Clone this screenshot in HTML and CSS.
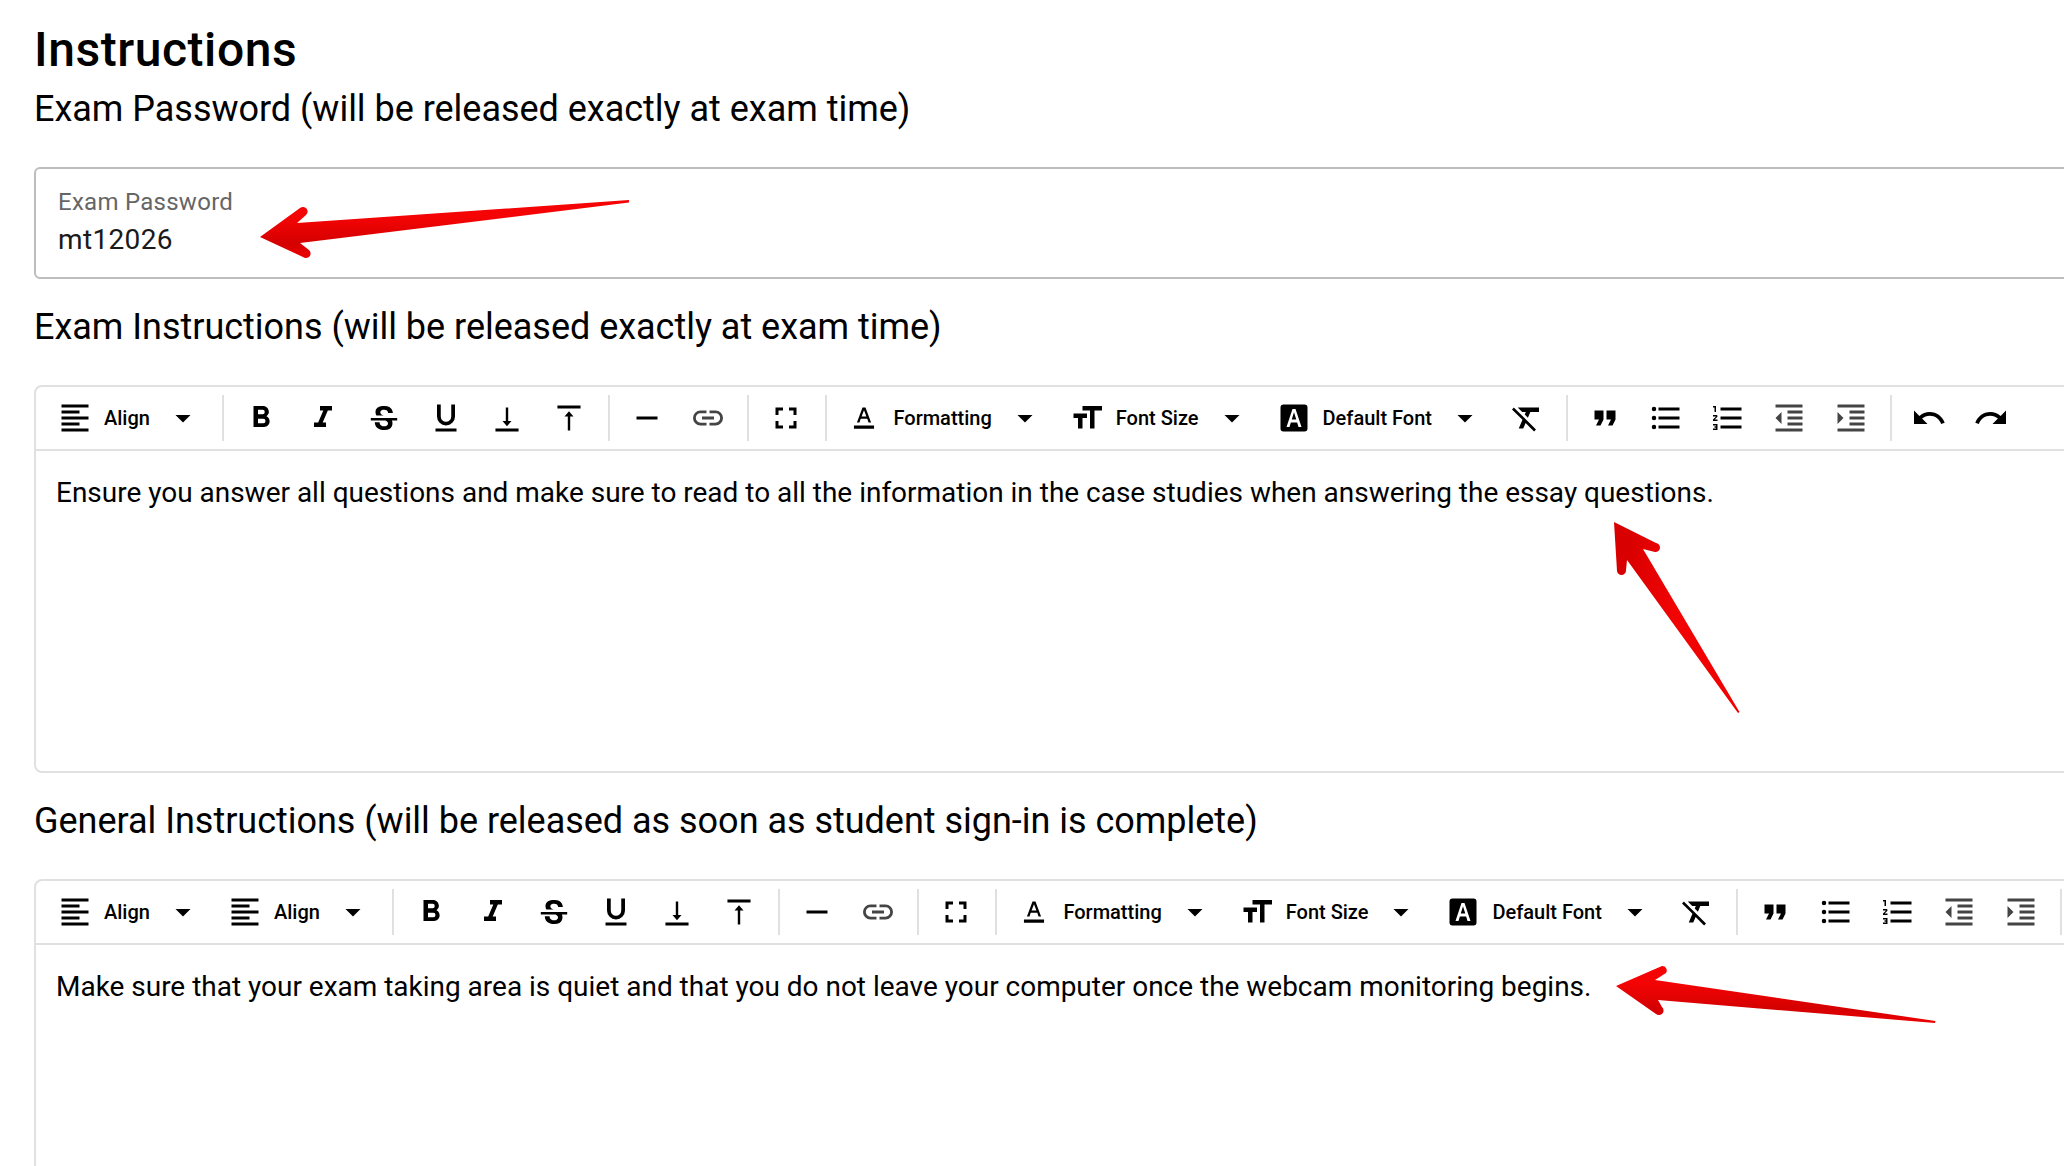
FILE: index.html
```html
<!DOCTYPE html>
<html lang="en">
<head>
<meta charset="utf-8">
<title>Instructions</title>
<link rel="stylesheet" href="styles.css">
</head>
<body>
<svg class="defs" width="0" height="0" aria-hidden="true">
  <symbol id="i-align" viewBox="0 0 24 24"><path d="M3,3H21V5H3V3M3,7H15V9H3V7M3,11H21V13H3V11M3,15H15V17H3V15M3,19H21V21H3V19Z"/></symbol>
  <symbol id="i-caret" viewBox="0 0 24 24"><path d="M7,10L12,15L17,10H7Z"/></symbol>
  <symbol id="i-bold" viewBox="0 0 24 24"><path d="M13.5,15.5H10V12.5H13.5A1.5,1.5 0 0,1 15,14A1.5,1.5 0 0,1 13.5,15.5M10,6.5H13A1.5,1.5 0 0,1 14.5,8A1.5,1.5 0 0,1 13,9.5H10M15.6,10.79C16.57,10.11 17.25,9 17.25,8C17.25,5.74 15.5,4 13.25,4H7V18H14.04C16.14,18 17.75,16.3 17.75,14.21C17.75,12.69 16.89,11.39 15.6,10.79Z"/></symbol>
  <symbol id="i-italic" viewBox="0 0 24 24"><path d="M10,4V7H12.21L8.79,15H6V18H14V15H11.79L15.21,7H18V4H10Z"/></symbol>
  <symbol id="i-strike" viewBox="-3 -3 30 30"><path d="M23,12V14H18.61C19.61,16.14 19.56,22 12.38,22C4.05,22.05 4.37,15.5 4.37,15.5L8.34,15.55C8.37,18.92 11.5,18.92 12.12,18.88C12.76,18.83 15.15,18.84 15.34,16.5C15.42,15.41 14.32,14.58 13.12,14H1V12H23M19.41,7.89L15.43,7.86C15.43,7.86 15.6,5.09 12.15,5.08C8.7,5.06 9,7.28 9,7.56C9.04,7.84 9.34,9.22 12,9.88H5.71C5.71,9.88 2.22,3 10.74,2C19.45,1 19.43,7.91 19.41,7.89Z"/></symbol>
  <symbol id="i-under" viewBox="0 0 24 24"><path d="M5,21H19V19H5V21M12,17A6,6 0 0,0 18,11V3H15.5V11A3.5,3.5 0 0,1 12,14.5A3.5,3.5 0 0,1 8.5,11V3H6V11A6,6 0 0,0 12,17Z"/></symbol>
  <symbol id="i-down" viewBox="0 0 24 24"><path d="M11.2,5H12.8V14H15L12,17.5L9,14H11.2V5M4.3,19H19.7V21H4.3V19Z"/></symbol>
  <symbol id="i-up" viewBox="0 0 24 24"><path d="M4.300,3.700H19.700V5.700H4.300V3.700M11.200,20.300V11H9L12,7.500L15,11H12.800V20.300H11.200Z"/></symbol>
  <symbol id="i-minus" viewBox="0 0 24 24"><path d="M19,13H5V11H19V13Z"/></symbol>
  <symbol id="i-link" viewBox="0 0 24 24"><path d="M3.9,12C3.9,10.29 5.29,8.9 7,8.9H11V7H7A5,5 0 0,0 2,12A5,5 0 0,0 7,17H11V15.1H7C5.29,15.1 3.9,13.71 3.9,12M8,13H16V11H8V13M17,7H13V8.9H17C18.71,8.9 20.1,10.29 20.1,12C20.1,13.71 18.71,15.1 17,15.1H13V17H17A5,5 0 0,0 22,12A5,5 0 0,0 17,7Z"/></symbol>
  <symbol id="i-full" viewBox="0 0 24 24"><path d="M5,5H10V7H7V10H5V5M14,5H19V10H17V7H14V5M17,14H19V19H14V17H17V14M10,17V19H5V14H7V17H10Z"/></symbol>
  <symbol id="i-color" viewBox="0 0 24 24"><path fill-rule="evenodd" d="M11,5L7.300,15H9L9.800,12.500H14.200L15,15H16.700L13,5H11ZM10.400,11L12,6.800L13.600,11H10.400ZM5.300,17H18.700V19.200H5.300V17Z"/></symbol>
  <symbol id="i-size" viewBox="0 0 24 24"><path d="M3,12H6V19H9V12H12V9H3M9,4V7H14V19H17V7H22V4H9Z"/></symbol>
  <symbol id="i-font" viewBox="0 0 24 24"><path fill-rule="evenodd" d="M5,3H19A2,2 0 0,1 21,5V19A2,2 0 0,1 19,21H5A2,2 0 0,1 3,19V5A2,2 0 0,1 5,3ZM11,6L7,18H9L9.9,15H14.1L15,18H17L13,6H11ZM10.5,13L12,8.2L13.5,13H10.5Z"/></symbol>
  <symbol id="i-clear" viewBox="0 0 24 24"><path d="M3.27 5L2 6.27l6.97 6.97L6.5 19h3l1.57-3.66L16.73 21 18 19.73 3.55 5.27 3.27 5zM6 5v.18L8.82 8h2.4l-.72 1.68 2.1 2.1L14.21 8H20V5H6z"/></symbol>
  <symbol id="i-quote" viewBox="0 0 24 24"><path d="M14,17H17L19,13V7H13V13H16M6,17H9L11,13V7H5V13H8L6,17Z"/></symbol>
  <symbol id="i-ul" viewBox="0 0 24 24"><path d="M7,5H21V7H7V5M7,13V11H21V13H7M4,4.5A1.5,1.5 0 0,1 5.5,6A1.5,1.5 0 0,1 4,7.5A1.5,1.5 0 0,1 2.5,6A1.5,1.5 0 0,1 4,4.5M4,10.5A1.5,1.5 0 0,1 5.5,12A1.5,1.5 0 0,1 4,13.5A1.5,1.5 0 0,1 2.5,12A1.5,1.5 0 0,1 4,10.5M7,19V17H21V19H7M4,16.5A1.5,1.5 0 0,1 5.5,18A1.5,1.5 0 0,1 4,19.5A1.5,1.5 0 0,1 2.5,18A1.5,1.5 0 0,1 4,16.5Z"/></symbol>
  <symbol id="i-ol" viewBox="0 0 24 24"><path d="M7,13V11H21V13H7M7,19V17H21V19H7M7,7V5H21V7H7M3,8V5H2V4H4V8H3M2,17V16H5V20H2V19H4V18.5H3V17.5H4V17H2M4.25,10A0.75,0.75 0 0,1 5,10.75C5,10.95 4.92,11.14 4.79,11.27L3.12,13H5V14H2V13.08L4,11H2V10H4.25Z"/></symbol>
  <symbol id="i-outdent" viewBox="0 0 24 24"><path d="M11,13H21V11H11M11,9H21V7H11M3,3V5H21V3M11,17H21V15H11M7,8L3,12L7,16M3,21H21V19H3V21Z"/></symbol>
  <symbol id="i-indent" viewBox="0 0 24 24"><path d="M11,13H21V11H11M11,9H21V7H11M3,3V5H21V3M11,17H21V15H11M3,8V16L7,12M3,21H21V19H3V21Z"/></symbol>
  <symbol id="i-undo" viewBox="0 0 24 24"><path d="M12.5,8C9.85,8 7.45,9 5.6,10.6L2,7V16H11L7.38,12.38C8.77,11.22 10.54,10.5 12.5,10.5C16.04,10.5 19.05,12.81 20.1,16L22.47,15.22C21.08,11.03 17.15,8 12.5,8Z"/></symbol>
  <symbol id="i-redo" viewBox="0 0 24 24"><path d="M18.4,10.6C16.55,9 14.15,8 11.5,8C6.85,8 2.92,11.03 1.53,15.22L3.9,16C4.95,12.81 7.96,10.5 11.5,10.5C13.46,10.5 15.23,11.22 16.62,12.38L13,16H22V7L18.4,10.6Z"/></symbol>
</svg>

<main class="page">
  <h1 class="title">Instructions</h1>
  <h2 class="sub sub-1">Exam Password (will be released exactly at exam time)</h2>
  <div class="field">
    <div class="field-label">Exam Password</div>
    <div class="field-value">mt12026</div>
  </div>

  <h2 class="sub sub-2">Exam Instructions (will be released exactly at exam time)</h2>
  <section class="editor editor-1">
    <div class="toolbar">
      <div class="dd"><svg class="ic"><use href="#i-align"/></svg><span>Align</span><svg class="ic"><use href="#i-caret"/></svg></div>
      <i class="sep"></i>
      <div class="btn"><svg class="ic"><use href="#i-bold"/></svg></div>
      <div class="btn"><svg class="ic"><use href="#i-italic"/></svg></div>
      <div class="btn"><svg class="ic"><use href="#i-strike"/></svg></div>
      <div class="btn"><svg class="ic"><use href="#i-under"/></svg></div>
      <div class="btn"><svg class="ic"><use href="#i-down"/></svg></div>
      <div class="btn"><svg class="ic"><use href="#i-up"/></svg></div>
      <i class="sep"></i>
      <div class="btn"><svg class="ic"><use href="#i-minus"/></svg></div>
      <div class="btn dim"><svg class="ic"><use href="#i-link"/></svg></div>
      <i class="sep"></i>
      <div class="btn"><svg class="ic"><use href="#i-full"/></svg></div>
      <i class="sep"></i>
      <div class="dd"><svg class="ic"><use href="#i-color"/></svg><span>Formatting</span><svg class="ic"><use href="#i-caret"/></svg></div>
      <div class="dd"><svg class="ic"><use href="#i-size"/></svg><span>Font Size</span><svg class="ic"><use href="#i-caret"/></svg></div>
      <div class="dd"><svg class="ic"><use href="#i-font"/></svg><span>Default Font</span><svg class="ic"><use href="#i-caret"/></svg></div>
      <div class="btn"><svg class="ic"><use href="#i-clear"/></svg></div>
      <i class="sep"></i>
      <div class="btn"><svg class="ic"><use href="#i-quote"/></svg></div>
      <div class="btn"><svg class="ic"><use href="#i-ul"/></svg></div>
      <div class="btn"><svg class="ic"><use href="#i-ol"/></svg></div>
      <div class="btn dim"><svg class="ic"><use href="#i-outdent"/></svg></div>
      <div class="btn dim"><svg class="ic"><use href="#i-indent"/></svg></div>
      <i class="sep"></i>
      <div class="btn"><svg class="ic"><use href="#i-undo"/></svg></div>
      <div class="btn"><svg class="ic"><use href="#i-redo"/></svg></div>
    </div>
    <div class="content">Ensure you answer all questions and make sure to read to all the information in the case studies when answering the essay questions.</div>
  </section>

  <h2 class="sub sub-3">General Instructions (will be released as soon as student sign-in is complete)</h2>
  <section class="editor editor-2">
    <div class="toolbar">
      <div class="dd"><svg class="ic"><use href="#i-align"/></svg><span>Align</span><svg class="ic"><use href="#i-caret"/></svg></div>
      <div class="dd"><svg class="ic"><use href="#i-align"/></svg><span>Align</span><svg class="ic"><use href="#i-caret"/></svg></div>
      <i class="sep"></i>
      <div class="btn"><svg class="ic"><use href="#i-bold"/></svg></div>
      <div class="btn"><svg class="ic"><use href="#i-italic"/></svg></div>
      <div class="btn"><svg class="ic"><use href="#i-strike"/></svg></div>
      <div class="btn"><svg class="ic"><use href="#i-under"/></svg></div>
      <div class="btn"><svg class="ic"><use href="#i-down"/></svg></div>
      <div class="btn"><svg class="ic"><use href="#i-up"/></svg></div>
      <i class="sep"></i>
      <div class="btn"><svg class="ic"><use href="#i-minus"/></svg></div>
      <div class="btn dim"><svg class="ic"><use href="#i-link"/></svg></div>
      <i class="sep"></i>
      <div class="btn"><svg class="ic"><use href="#i-full"/></svg></div>
      <i class="sep"></i>
      <div class="dd"><svg class="ic"><use href="#i-color"/></svg><span>Formatting</span><svg class="ic"><use href="#i-caret"/></svg></div>
      <div class="dd"><svg class="ic"><use href="#i-size"/></svg><span>Font Size</span><svg class="ic"><use href="#i-caret"/></svg></div>
      <div class="dd"><svg class="ic"><use href="#i-font"/></svg><span>Default Font</span><svg class="ic"><use href="#i-caret"/></svg></div>
      <div class="btn"><svg class="ic"><use href="#i-clear"/></svg></div>
      <i class="sep"></i>
      <div class="btn"><svg class="ic"><use href="#i-quote"/></svg></div>
      <div class="btn"><svg class="ic"><use href="#i-ul"/></svg></div>
      <div class="btn"><svg class="ic"><use href="#i-ol"/></svg></div>
      <div class="btn dim"><svg class="ic"><use href="#i-outdent"/></svg></div>
      <div class="btn dim"><svg class="ic"><use href="#i-indent"/></svg></div>
      <i class="sep"></i>
      <div class="btn"><svg class="ic"><use href="#i-undo"/></svg></div>
      <div class="btn"><svg class="ic"><use href="#i-redo"/></svg></div>
    </div>
    <div class="content">Make sure that your exam taking area is quiet and that you do not leave your computer once the webcam monitoring begins.</div>
  </section>
</main>

<svg class="arrows" viewBox="0 0 2064 1166" aria-hidden="true">
  <defs>
    <linearGradient id="g-v" x1="0" y1="0" x2="0" y2="1">
      <stop offset="0.3" stop-color="#f40404"/><stop offset="0.75" stop-color="#d40000"/><stop offset="1" stop-color="#ee0000"/>
    </linearGradient>
    <linearGradient id="g-h" x1="0" y1="0" x2="1" y2="0">
      <stop offset="0.1" stop-color="#d80000"/><stop offset="0.5" stop-color="#f20404"/><stop offset="1" stop-color="#f00000"/>
    </linearGradient>
  </defs>
  <path fill="url(#g-v)" d="M260 237L300 208A4.5 4.5 0 0 1 306 215L297 223L629 200L629 202.500L300 243L309 250A4.5 4.500 0 0 1 303 257Z"/>
  <path fill="url(#g-h)" d="M1614 522L1656 543A3.800 3.800 0 0 1 1655 552L1643 549L1739.500 712L1738 713L1627 560L1626 570A4.500 4.500 0 0 1 1617 571Z"/>
  <path fill="url(#g-v)" d="M1616 986L1662 966A4.500 4.500 0 0 1 1666 973L1655 980L1935.500 1021L1935 1023L1658 1000L1662 1007A4.500 4.500 0 0 1 1656 1014Z"/>
</svg>
</body>
</html>
```
FILE: styles.css
```css
* { box-sizing: border-box; }
html, body { margin: 0; height: 100%; overflow: hidden; background: #fff; }
body { font-family: Roboto, "Liberation Sans", sans-serif; color: #000; position: relative; }
.defs { position: absolute; }

.page { width: 2500px; padding: 20px 0 0 34px; }
.title { margin: 0; font-size: 48px; line-height: 60px; font-weight: 500; letter-spacing: 0.55px; }
.sub { margin: 0; font-size: 36px; line-height: 48px; font-weight: 400; letter-spacing: -0.02px; }
.sub-1 { margin-top: 5px; }
.sub-2 { margin-top: 24px; }
.sub-3 { margin-top: 24px; }

.field { margin-top: 34px; height: 112px; border: 2px solid #bdbdbd; border-radius: 6px; padding: 17px 22px 0; }
.field-label { font-size: 24px; line-height: 32px; color: #666; letter-spacing: 0.27px; }
.field-value { font-size: 28px; line-height: 40px; margin-top: 2px; color: #1a1a1a; letter-spacing: 0.35px; }

.editor { border: 2px solid #e0e0e0; border-radius: 8px; margin-top: 34px; }
.editor-1 { height: 388px; }
.editor-2 { height: 400px; border-bottom: 0; }

.toolbar { display: flex; align-items: center; height: 64px; padding: 0 8px; border-bottom: 2px solid #e0e0e0; }
.btn { flex: none; width: 61.6px; display: flex; justify-content: center; align-items: center; }
.dd { flex: none; display: flex; align-items: center; padding: 0 13px; font-size: 20px; font-weight: 500; }
.dd span { margin: 0 15px 0 11px; white-space: nowrap; }
.ic { flex: none; width: 36px; height: 36px; fill: #000; }
.dim .ic { fill: #444; }
.sep { flex: none; width: 2px; height: 46px; margin: 0 6.3px 0 8px; background: #e0e0e0; }

.content { padding: 22px 20px; font-size: 27.98px; line-height: 40px; white-space: nowrap; }

.arrows { position: absolute; left: 0; top: 0; width: 2064px; height: 1166px; pointer-events: none; }
```
